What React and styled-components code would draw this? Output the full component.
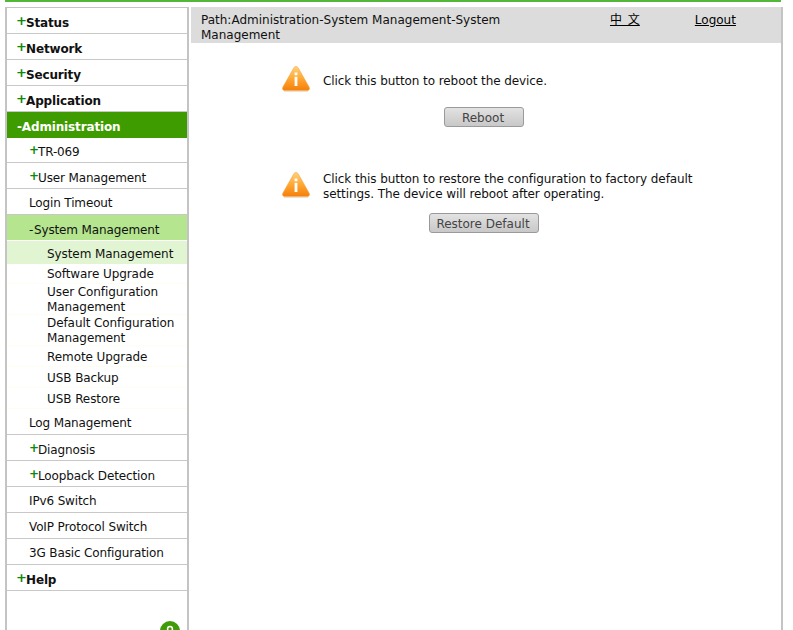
import React from 'react'
import styled, { createGlobalStyle } from 'styled-components'

const GlobalStyle = createGlobalStyle`
html, body {
  margin: 0;
  padding: 0;
  height: 630px;
  overflow: hidden;
  background: #fff;
  font-family: "DejaVu Sans", sans-serif;
}
`

const Page = styled.div`
width: 793px;
height: 630px;
overflow: hidden;
position: relative;
padding-left: 5px;
box-sizing: border-box;
`

const TopBar = styled.div`
width: 776px;
height: 2px;
background: #53b83a;
`

const Columns = styled.div`
display: flex;
margin-top: 5px;
height: 640px;
`

const Sidebar = styled.nav`
width: 180px;
flex: none;
border: solid #c4c4c4;
border-width: 1px 2px 0;
`

const Row = styled.div`
box-sizing: border-box;
height: ${p => p.$h || 26}px;
border-bottom: 1px solid ${p => p.$noLine ? 'transparent' : '#c8c8c8'};
padding-left: ${p => p.$top ? 10 : 22}px;
font-size: 12px;
letter-spacing: ${p => p.$top ? -0.15 : -0.14}px;
line-height: ${p => p.$lh || (p.$top ? 30 : 29)}px;
font-weight: ${p => p.$top ? 700 : 400};
background: ${p => p.$bg || '#fff'};
color: ${p => p.$color || '#111'};
white-space: nowrap;
`

const Sign = styled.span`
display: inline-block;
width: ${p => p.$big ? 10 : 9}px;
margin-left: ${p => p.$big ? -1 : 0}px;
color: #0a8a0a;
font-size: ${p => p.$big ? 13 : 12}px;
font-weight: 700;
letter-spacing: ${p => p.$big ? -2 : -1.1}px;
line-height: 12px;
vertical-align: 2px;
`

const Dash = styled.span`
display: inline-block;
width: 5px;
`

const Sub = styled.div`
box-sizing: border-box;
display: flex;
align-items: center;
height: ${p => p.$h}px;
padding-left: 40px;
padding-top: ${p => p.$active ? 4 : 2}px;
font-size: 12px;
letter-spacing: -0.08px;
line-height: 15px;
margin-top: ${p => p.$active ? 1 : 0}px;
background: ${p => p.$active ? '#e2f5d3' : '#fff'};
color: #111;
border-bottom: 1px solid ${p => p.$active ? '#e2f5d3' : '#fdfdf0'};
`

const Main = styled.main`
width: 590px;
margin-left: 2px;
border-right: 2px solid #c4c4c4;
`

const PathBar = styled.header`
display: flex;
height: 36px;
background: #dcdcdc;
font-size: 12px;
line-height: 15px;
color: #111;
padding: 6px 0 0 10px;
box-sizing: border-box;
`

const PathText = styled.div`
width: 324px;
`

const Lang = styled.a`
margin-left: 85px;
height: 15px;
color: #000;
text-decoration: underline;
font-family: "DejaVu Sans", "Noto Sans CJK SC", sans-serif;
font-size: 12px;
word-spacing: 2px;
white-space: pre;
`

const Logout = styled.a`
margin-left: 55px;
height: 15px;
color: #000;
text-decoration: underline;
`

const Notice = styled.section`
display: flex;
align-items: flex-start;
padding-left: 90px;
padding-top: ${p => p.$top}px;
`

const IconBox = styled.div`
width: 42px;
flex: none;
svg { display: block; }
`

const Message = styled.p`
margin: 0;
width: 390px;
font-size: 12px;
letter-spacing: -0.08px;
line-height: 15px;
color: #111;
padding-top: ${p => p.$pt || 0}px;
`

const ButtonRow = styled.div`
padding-left: ${p => p.$left}px;
margin-top: ${p => p.$mt}px;
`

const Button = styled.button`
display: block;
box-sizing: border-box;
width: ${p => p.$w}px;
height: 20px;
padding: 2px 2px 0 0;
border: 1px solid #9a9a9a;
border-radius: 3px;
background: linear-gradient(#e2e2e2, #c8c8c8);
font-family: inherit;
font-size: 12px;
color: #444;
`

const HelpDot = styled.div`
position: absolute;
left: 160px;
top: 621px;
width: 20px;
height: 20px;
border-radius: 50%;
background: #3f9c08;
svg { display: block; }
`

function WarnIcon() {
  return (
    <svg width="30" height="28" viewBox="0 0 30 28">
      <defs>
        <linearGradient id="warn" x1="0" y1="0" x2="0" y2="1">
          <stop offset="0" stopColor="#ffd27a" />
          <stop offset="0.5" stopColor="#ffa733" />
          <stop offset="1" stopColor="#f57f0a" />
        </linearGradient>
      </defs>
      <path d="M15 1.500c1 0 1.800.6 2.300 1.500l10.800 19c1 1.800.2 3.600-2 3.600H3.900c-2.200 0-3-1.800-2-3.600L12.700 3c.5-.9 1.300-1.500 2.300-1.500z" fill="url(#warn)" stroke="#f2a84a" strokeWidth="0.6" />
      <rect x="13.600" y="7.500" width="2.800" height="2.800" fill="#fff" />
      <rect x="13.600" y="11.800" width="2.800" height="9.200" fill="#fff" />
      <rect x="3" y="26" width="24" height="1" fill="#e8e0d4" />
    </svg>
  )
}

const topBefore = ['Status', 'Network', 'Security', 'Application']
const subItems = [
  { label: 'Software Upgrade', h: 20 },
  { label: <>User Configuration<br />Management</>, h: 31 },
  { label: <>Default Configuration<br />Management</>, h: 31 },
  { label: 'Remote Upgrade', h: 21 },
  { label: 'USB Backup', h: 21 },
  { label: 'USB Restore', h: 21 },
]

export default function App() {
  return (
    <Page>
      <GlobalStyle />
      <TopBar />
      <Columns>
        <Sidebar>
          {topBefore.map(name => (
            <Row $top key={name}><Sign $big>+</Sign>{name}</Row>
          ))}
          <Row $top $noLine $bg="#3f9c00" $color="#fff">-Administration</Row>
          <Row $h={25}><Sign>+</Sign>TR-069</Row>
          <Row $lh={31}><Sign>+</Sign>User Management</Row>
          <Row>Login Timeout</Row>
          <Row $noLine $h={25} $lh={30} $bg="#b5e58f"><Dash>-</Dash>System Management</Row>
          <Sub $active $h={23}>System Management</Sub>
          {subItems.map((item, i) => (
            <Sub key={i} $h={item.h}><span>{item.label}</span></Sub>
          ))}
          <Row>Log Management</Row>
          <Row $lh={31}><Sign>+</Sign>Diagnosis</Row>
          <Row $lh={31}><Sign>+</Sign>Loopback Detection</Row>
          <Row>IPv6 Switch</Row>
          <Row>VoIP Protocol Switch</Row>
          <Row>3G Basic Configuration</Row>
          <Row $top><Sign $big>+</Sign>Help</Row>
        </Sidebar>
        <Main>
          <PathBar>
            <PathText>Path:Administration-System Management-System Management</PathText>
            <Lang>中 文</Lang>
            <Logout>Logout</Logout>
          </PathBar>
          <Notice $top={22}>
            <IconBox><WarnIcon /></IconBox>
            <Message $pt={9}>Click this button to reboot the device.</Message>
          </Notice>
          <ButtonRow $left={253} $mt={14}><Button $w={80}>Reboot</Button></ButtonRow>
          <Notice $top={44}>
            <IconBox><WarnIcon /></IconBox>
            <Message $pt={1}>Click this button to restore the configuration to factory default settings. The device will reboot after operating.</Message>
          </Notice>
          <ButtonRow $left={238} $mt={11}><Button $w={110}>Restore Default</Button></ButtonRow>
        </Main>
      </Columns>
      <HelpDot>
        <svg width="20" height="20" viewBox="0 0 20 20">
          <circle cx="10" cy="8" r="2.400" fill="none" stroke="#fff" strokeWidth="1.500" />
        </svg>
      </HelpDot>
    </Page>
  )
}
